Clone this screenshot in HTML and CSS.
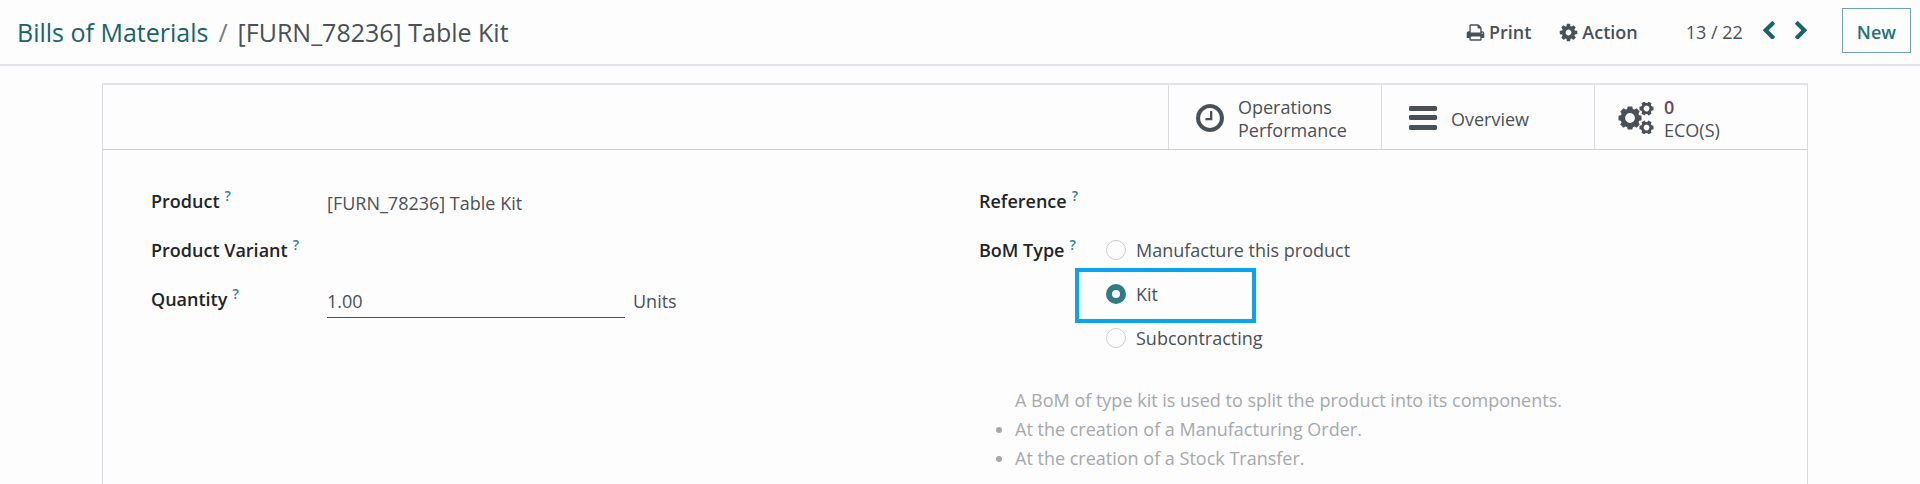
FILE: index.html
```html
<!doctype html>

<html lang="en">
  <head>
    <meta charset="utf-8">
    <title>[FURN_78236] Table Kit</title>
    <link rel="stylesheet" href="styles.css">
  </head>

  <body>
    <!-- Breadcrumb and record actions. -->
    <header class="control-panel">
      <nav class="breadcrumb">
        <a href="#">Bills of Materials</a>
        <span class="separator">/</span>
        <span>[FURN_78236] Table Kit</span>
      </nav>
      <div class="actions">
        <button class="action" type="button">
          <svg class="icon-small" viewBox="64 0 1664 1792"><path d="M448 1536h896v-256h-896v256zm0-640h896v-384h-160q-40 0-68-28t-28-68v-160h-640v640zm1152 64q0-26-19-45t-45-19-45 19-19 45 19 45 45 19 45-19 19-45zm128 0v416q0 13-9.500 22.500t-22.500 9.500h-224v160q0 40-28 68t-68 28h-960q-40 0-68-28t-28-68v-160h-224q-13 0-22.500-9.500t-9.500-22.500v-416q0-79 56.500-135.500t135.500-56.500h64v-544q0-40 28-68t68-28h672q40 0 88 20t76 48l152 152q28 28 48 76t20 88v256h64q79 0 135.500 56.500t56.500 135.500z"/></svg>
          Print
        </button>
        <button class="action" type="button">
          <svg class="icon-small" viewBox="64 64 1664 1664"><path d="M1152 896q0-106-75-181t-181-75-181 75-75 181 75 181 181 75 181-75 75-181zm512-109v222q0 12-8 23t-20 13l-185 28q-19 54-39 91 35 50 107 138 10 12 10 25t-9 23q-27 37-99 108t-94 71q-12 0-26-9l-138-108q-44 23-91 38-16 136-29 186-7 28-36 28h-222q-14 0-24.500-8.500t-11.500-21.500l-28-184q-49-16-90-37l-141 107q-10 9-25 9-14 0-25-11-126-114-165-168-7-10-7-23 0-12 8-23 15-21 51-66.500t54-70.500q-27-50-41-99l-183-27q-13-2-21-12.500t-8-23.500v-222q0-12 8-23t19-13l186-28q14-46 39-92-40-57-107-138-10-12-10-24 0-10 9-23 26-36 98.500-107.500t94.500-71.500q13 0 26 10l138 107q44-23 91-38 16-136 29-186 7-28 36-28h222q14 0 24.500 8.500t11.500 21.500l28 184q49 16 90 37l142-107q9-9 24-9 13 0 25 10 129 119 165 170 7 8 7 22 0 12-8 23-15 21-51 66.500t-54 70.500q26 50 41 98l183 28q13 2 21 12.500t8 23.500z"/></svg>
          Action
        </button>
      </div>
      <div class="pager">
        <span class="pager-count">13 / 22</span>
        <button class="pager-button" type="button" aria-label="Previous">
          <svg viewBox="410 26 1036 1612"><path d="M1427 301l-531 531 531 531q19 19 19 45t-19 45l-166 166q-19 19-45 19t-45-19l-742-742q-19-19-19-45t19-45l742-742q19-19 45-19t45 19l166 166q19 19 19 45t-19 45z"/></svg>
        </button>
        <button class="pager-button" type="button" aria-label="Next">
          <svg viewBox="346 26 1036 1612"><path d="M1363 877l-742 742q-19 19-45 19t-45-19l-166-166q-19-19-19-45t19-45l531-531-531-531q-19-19-19-45t19-45l166-166q19-19 45-19t45 19l742 742q19 19 19 45t-19 45z"/></svg>
        </button>
      </div>
      <button class="new-button" type="button">New</button>
    </header>

    <main class="sheet">
      <!-- Stat buttons. -->
      <div class="button-box">
        <button class="stat-button" type="button">
          <svg class="icon-clock" viewBox="128 128 1536 1536"><path d="M1024 544v448q0 14-9 23t-23 9h-320q-14 0-23-9t-9-23v-64q0-14 9-23t23-9h224v-352q0-14 9-23t23-9h64q14 0 23 9t9 23zm416 352q0-148-73-273t-198-198-273-73-273 73-198 198-73 273 73 273 198 198 273 73 273-73 198-198 73-273zm224 0q0 209-103 385.500t-279.500 279.500-385.500 103-385.500-103-279.500-279.500-103-385.500 103-385.500 279.500-279.500 385.500-103 385.500 103 279.500 279.500 103 385.500z"/></svg>
          <span>Operations<br>Performance</span>
        </button>
        <button class="stat-button" type="button">
          <svg class="icon-bars" viewBox="0 0 28 24"><path d="M1 0h26l1 1v3l-1 1H1L0 4V1zM1 9h26l1 1v3l-1 1H1l-1-1v-3zM1 19h26l1 1v3l-1 1H1l-1-1v-3z"/></svg>
          <span>Overview</span>
        </button>
        <button class="stat-button stat-eco" type="button">
          <svg class="icon-cogs" viewBox="0 0 36 32">
            <defs>
              <path id="tooth-pair" d="M-2.300-11.500h4.600l.9 4h-6.400zM-2.300 11.500h4.600l.9-4h-6.400z"/>
              <path id="small-teeth" d="M-1.700-7h3.400l.5 2.500h-4.400zM-1.700 7h3.400l.5-2.500h-4.400z"/>
              <g id="small-cog">
                <circle r="4.200" fill="none" stroke="currentColor" stroke-width="2.800"/>
                <use href="#small-teeth"/>
                <use href="#small-teeth" transform="rotate(60)"/>
                <use href="#small-teeth" transform="rotate(120)"/>
              </g>
            </defs>
            <g transform="translate(12 16)">
              <circle r="7.200" fill="none" stroke="currentColor" stroke-width="4.600"/>
              <use href="#tooth-pair"/>
              <use href="#tooth-pair" transform="rotate(45)"/>
              <use href="#tooth-pair" transform="rotate(90)"/>
              <use href="#tooth-pair" transform="rotate(135)"/>
            </g>
            <use href="#small-cog" transform="translate(28.500 6.500) rotate(30)"/>
            <use href="#small-cog" transform="translate(28.500 25.500) rotate(30)"/>
          </svg>
          <span><strong class="stat-value">0</strong><br>ECO(S)</span>
        </button>
      </div>

      <form class="form">
        <div class="group">
          <div class="row">
            <span class="label">Product<sup>?</sup></span>
            <span class="value">[FURN_78236] Table Kit</span>
          </div>
          <div class="row">
            <span class="label">Product Variant<sup>?</sup></span>
          </div>
          <div class="row">
            <label class="label" for="quantity">Quantity<sup>?</sup></label>
            <input class="quantity" id="quantity" type="text" value="1.00">
            <span class="value">Units</span>
          </div>
        </div>

        <div class="group group-right">
          <div class="row">
            <span class="label">Reference<sup>?</sup></span>
          </div>
          <div class="row">
            <span class="label" id="bom-type">BoM Type<sup>?</sup></span>
            <div class="radios" role="radiogroup" aria-labelledby="bom-type">
              <label class="radio"><input type="radio" name="type">Manufacture this product</label>
              <label class="radio highlighted"><input type="radio" name="type" checked>Kit</label>
              <label class="radio"><input type="radio" name="type">Subcontracting</label>
            </div>
          </div>
          <div class="help">
            <p>A BoM of type kit is used to split the product into its components.</p>
            <ul>
              <li>At the creation of a Manufacturing Order.</li>
              <li>At the creation of a Stock Transfer.</li>
            </ul>
          </div>
        </div>
      </form>
    </main>
  </body>
</html>
```

FILE: styles.css
```css
*, *::after { box-sizing: border-box; margin: 0; padding: 0; }
html, body {
  overflow: hidden;
  height: 100%;
}
body {
  display: flex;
  flex-direction: column;
  background: #fdfdfd;
  font-family: "Open Sans", "Noto Sans", sans-serif;
  font-size: 18px;
  line-height: 28px;
  color: #495057;
}
button, input {
  font: inherit;
  color: inherit;
  background: none;
  border: none;
}
button { cursor: pointer; }
svg { display: block; fill: currentColor; }

.control-panel {
  display: flex;
  align-items: center;
  flex: none;
  height: 66px;
  padding: 0 9px 4px 17px;
  border-bottom: 2px solid #e3e4e9;
}
.breadcrumb {
  display: flex;
  gap: 10px;
  margin-right: auto;
  padding-top: 4px;
  font-size: 25px;
  line-height: 36px;
}
.breadcrumb a {
  color: #17646a;
  text-decoration: none;
}
.breadcrumb .separator { color: #777b80; }
.actions {
  display: flex;
  gap: 28px;
  margin-right: 48px;
  padding-top: 4px;
}
.action {
  display: flex;
  align-items: center;
  gap: 4px;
  font-weight: 600;
}
.icon-small { width: 19px; height: 19px; }
.pager {
  display: flex;
  align-items: center;
  gap: 20px;
  margin-right: 35px;
}
.pager-count { padding-top: 4px; }
.pager-button {
  width: 12px;
  color: #17646a;
}
.new-button {
  height: 45px;
  padding: 4px 14px 0;
  border: 1px solid #6fa5a9;
  font-weight: 600;
  color: #1f747b;
}

.sheet {
  flex: 1 0 auto;
  margin: 17px 112px 0 102px;
  border: 1px solid #d9dbe0;
  border-top: 2px solid #e1e3e9;
  border-bottom: none;
}
.button-box {
  display: flex;
  justify-content: flex-end;
  height: 65px;
  border-bottom: 1px solid #cccfd4;
}
.stat-button {
  display: flex;
  align-items: center;
  gap: 14px;
  width: 213px;
  padding: 2px 0 0 27px;
  border-left: 1px solid #d9dbe0;
  line-height: 23px;
  text-align: left;
}
.stat-button span { padding-top: 2px; }
.stat-eco { gap: 10px; padding-left: 23px; }
.stat-value { font-weight: 600; color: #6a4460; }
.icon-clock { width: 28px; height: 28px; }
.icon-bars { width: 28px; height: 24px; }
.icon-cogs { width: 36px; height: 32px; }

.form {
  display: grid;
  grid-template-columns: 1fr 1fr;
  gap: 48px;
  padding: 37px 48px 0;
}
.row {
  display: flex;
  align-items: flex-start;
  min-height: 49px;
}
.label {
  flex: none;
  width: 176px;
  font-weight: 600;
  color: #212529;
}
.group-right .label { width: 127px; }
.label sup {
  margin-left: 5px;
  font-size: 14px;
  line-height: 1px;
  color: #2380a8;
}
.value { line-height: 32px; }
.quantity {
  width: 298px;
  height: 33px;
  margin-right: 8px;
  border-bottom: 1px solid #495057;
  outline: none;
}

.radio {
  display: flex;
  align-items: center;
  gap: 10px;
  height: 28px;
  margin-bottom: 16px;
}
.radio input {
  appearance: none;
  width: 20px;
  height: 20px;
  border: 1px solid #c9ccd1;
  border-radius: 50%;
}
.radio input:checked { border: 6px solid #2f7d83; }
.highlighted { position: relative; }
/* Callout drawn round the selected type. */
.highlighted::after {
  content: "";
  position: absolute;
  top: -12px; left: -31px;
  width: 181px; height: 55px;
  border: 4px solid #08a4ec;
}

.help {
  margin-top: 18px;
  padding-left: 36px;
  line-height: 29px;
  color: #a5a8ad;
}
```
